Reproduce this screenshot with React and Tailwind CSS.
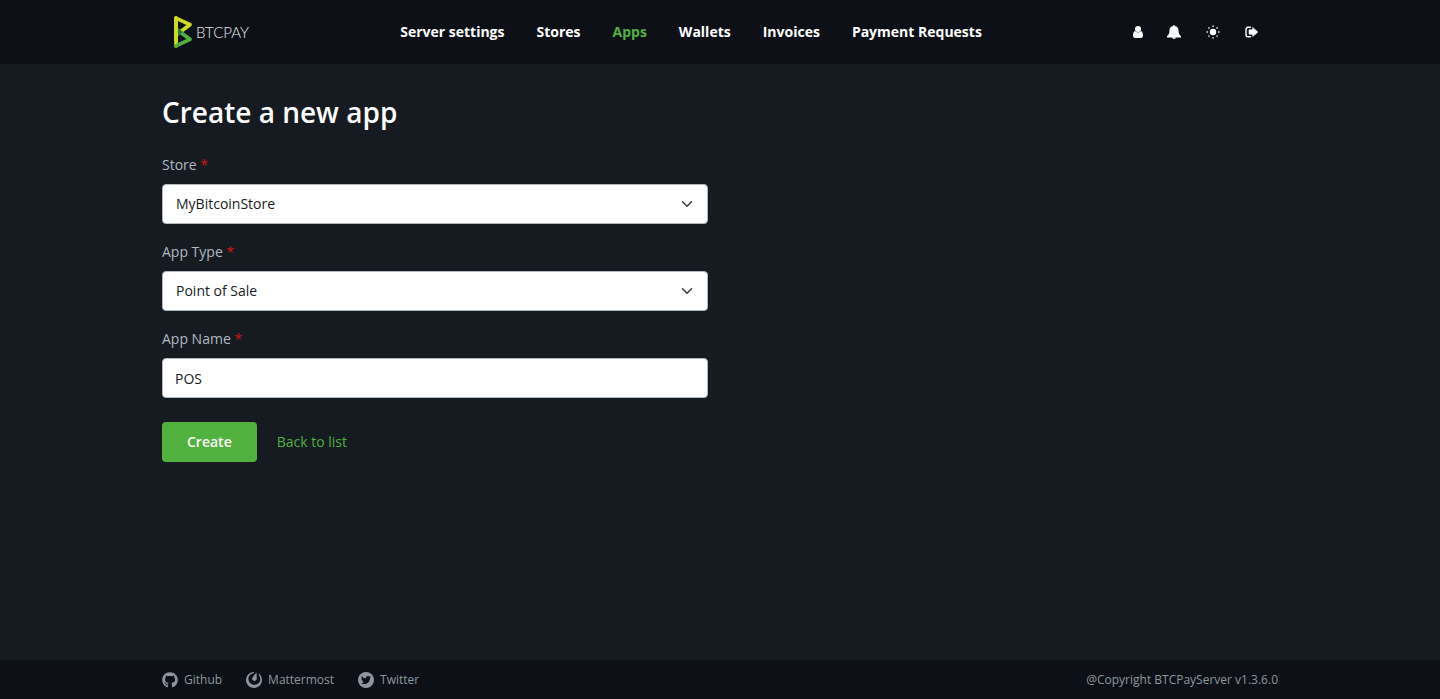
import { FaGithub, FaTwitter } from "react-icons/fa";
import { SiMattermost } from "react-icons/si";

const navItems = ["Server settings", "Stores", "Apps", "Wallets", "Invoices", "Payment Requests"];

function Logo() {
  return (
    <a href="#home" aria-label="BTCPay" className="flex items-center gap-1 text-[#e6e8ea]">
      <svg viewBox="0 0 47 84" className="h-8 w-[18px]" aria-hidden="true">
        <path fill="#CEDC21" d="M5.206 83.433a4.86 4.86 0 01-4.859-4.861V5.431a4.86 4.86 0 119.719 0v73.141a4.861 4.861 0 01-4.86 4.861" />
        <path fill="#51B13E" d="M5.209 83.433a4.862 4.862 0 01-2.086-9.253L32.43 60.274 2.323 38.093a4.861 4.861 0 015.766-7.826l36.647 26.999a4.864 4.864 0 01-.799 8.306L7.289 82.964a4.866 4.866 0 01-2.08.469" />
        <path fill="#CEDC21" d="M5.211 54.684a4.86 4.86 0 01-2.887-8.774L32.43 23.73 3.123 9.821a4.861 4.861 0 014.166-8.784l36.648 17.394a4.86 4.86 0 01.799 8.305l-36.647 27a4.844 4.844 0 01-2.878.948" />
        <path fill="#1E7A44" d="M10.066 31.725v20.553L24.01 42.006z" />
        <path fill="#CEDC21" d="M10.066 5.431A4.861 4.861 0 005.206.57 4.86 4.86 0 00.347 5.431v61.165h9.72V5.431z" />
      </svg>
      <span className="font-[Lato,sans-serif] text-[15px] leading-4 font-light">BTCPAY</span>
    </a>
  );
}

function UserIcon() {
  return (
    <svg viewBox="0 0 10 12" className="h-3 w-[10px]" fill="currentColor" aria-hidden="true">
      <circle cx="5" cy="3" r="3" />
      <path d="M2.100 5C.6 5.400 0 7.200 0 9.600 0 11 .8 12 2 12h6c1.200 0 2-1 2-2.400C10 7.200 9.400 5.400 7.900 5a3.700 3.700 0 01-5.800 0z" />
    </svg>
  );
}

function BellIcon() {
  return (
    <svg viewBox="0 0 14 14" className="size-[14px]" fill="currentColor" aria-hidden="true">
      <path d="M7 0a.9.9 0 01.9.9v.2C10.200 1.500 11.500 3.200 11.500 5.200c0 3 .8 4.700 2.500 5.900v1.300H0v-1.300C1.700 9.900 2.500 8.200 2.500 5.200c0-2 1.300-3.700 3.600-4.100V.9A.9.9 0 017 0z" />
      <path d="M5.100 12.200h3.800a1.900 1.800 0 01-3.800 0z" />
    </svg>
  );
}

function SunIcon() {
  return (
    <svg viewBox="-1 0 16 14" className="h-[14px] w-4" fill="currentColor" aria-hidden="true">
      <circle cx="7" cy="7" r="3.200" />
      <g opacity=".8">
        <circle cx="7" cy="1.200" r=".9" />
        <circle cx="7" cy="12.800" r=".9" />
        <circle cx="1.200" cy="7" r=".9" />
        <circle cx="12.800" cy="7" r=".9" />
        <circle cx="2.900" cy="2.900" r=".9" />
        <circle cx="11.100" cy="2.900" r=".9" />
        <circle cx="2.900" cy="11.100" r=".9" />
        <circle cx="11.100" cy="11.100" r=".9" />
      </g>
    </svg>
  );
}

function SignOutIcon() {
  return (
    <svg viewBox="0 0 13 12" className="h-3 w-[13px]" aria-hidden="true">
      <path d="M5.400 1.300H3A2 2 0 001 3.300v5.400a2 2 0 002 2h2.400" fill="none" stroke="currentColor" strokeWidth="1.400" strokeLinecap="round" />
      <path d="M7.700 1.500L12.500 5.700a.5.5 0 010 .7L7.700 10.500V8.300H4.500a.5.5 0 01-.5-.5V4.200a.5.5 0 01.5-.5h3.200z" fill="currentColor" stroke="currentColor" strokeWidth=".6" strokeLinejoin="round" />
    </svg>
  );
}

function TwitterIcon() {
  return (
    <span className="flex size-4 items-center justify-center rounded-full bg-[#8f979e] text-[#0d1117]">
      <FaTwitter className="size-[10px]" aria-hidden="true" />
    </span>
  );
}

function Field({ id, label, children }) {
  return (
    <div className="flex flex-col gap-2">
      <label htmlFor={id} className="leading-[23px] text-[#b1b8c0]">
        {label} <span className="text-[#d3180c]">*</span>
      </label>
      {children}
    </div>
  );
}

const controlClass = "h-10 w-full rounded border border-[#b1b8c0] bg-white text-[#161b22] outline-none";

function Select({ id, value }) {
  return (
    <div className="relative">
      <select id={id} defaultValue={value} className={`${controlClass} appearance-none pr-9 pl-[13px]`}>
        <option>{value}</option>
      </select>
      <svg viewBox="0 0 16 16" className="pointer-events-none absolute top-[14px] right-[15px] size-3" fill="none" stroke="#343a40" strokeWidth="2" strokeLinecap="round" strokeLinejoin="round" aria-hidden="true">
        <path d="M2 5l6 6 6-6" />
      </svg>
    </div>
  );
}

export default function App() {
  return (
    <div className="flex min-h-screen flex-col bg-[#161b22] font-['Open_Sans',sans-serif] text-sm">
      <header className="bg-[#0d1117]">
        <div className="mx-auto flex h-16 max-w-[1140px] items-center justify-between pr-8 pl-6">
          <Logo />
          <nav className="flex gap-8 font-bold">
            {navItems.map((item) => (
              <a key={item} href="#nav" className={item === "Apps" ? "text-[#51b13e]" : "text-white"}>
                {item}
              </a>
            ))}
          </nav>
          <div className="flex items-center gap-6 text-white">
            <a href="#account" aria-label="Account"><UserIcon /></a>
            <a href="#notifications" aria-label="Notifications"><BellIcon /></a>
            <button type="button" aria-label="Toggle theme"><SunIcon /></button>
            <a href="#logout" aria-label="Sign out"><SignOutIcon /></a>
          </div>
        </div>
      </header>

      <main className="mx-auto w-full max-w-[1140px] flex-1 px-3 pt-8">
        <h1 className="mb-6 text-[28px] leading-[33px] font-semibold text-white">Create a new app</h1>
        <form className="w-full max-w-[546px]" onSubmit={(e) => e.preventDefault()}>
          <div className="flex flex-col gap-4">
            <Field id="store" label="Store">
              <Select id="store" value="MyBitcoinStore" />
            </Field>
            <Field id="type" label="App Type">
              <Select id="type" value="Point of Sale" />
            </Field>
            <Field id="name" label="App Name">
              <input id="name" type="text" defaultValue="POS" className={`${controlClass} px-3`} />
            </Field>
          </div>
          <div className="mt-6 flex items-center gap-5">
            <button type="submit" className="h-10 rounded bg-[#51b13e] px-[25px] font-semibold text-white">Create</button>
            <a href="#list" className="text-[#51b13e]">Back to list</a>
          </div>
        </form>
      </main>

      <footer className="bg-[#0d1117] text-xs text-[#8f979e]">
        <div className="mx-auto flex h-[39px] max-w-[1140px] items-center justify-between px-3">
          <div className="flex gap-6">
            <a href="#github" className="flex items-center gap-[6px]"><FaGithub className="size-4" />Github</a>
            <a href="#mattermost" className="flex items-center gap-[6px]"><SiMattermost className="size-4" />Mattermost</a>
            <a href="#twitter" className="flex items-center gap-[6px]"><TwitterIcon />Twitter</a>
          </div>
          <span>@Copyright BTCPayServer v1.3.6.0</span>
        </div>
      </footer>
    </div>
  );
}
